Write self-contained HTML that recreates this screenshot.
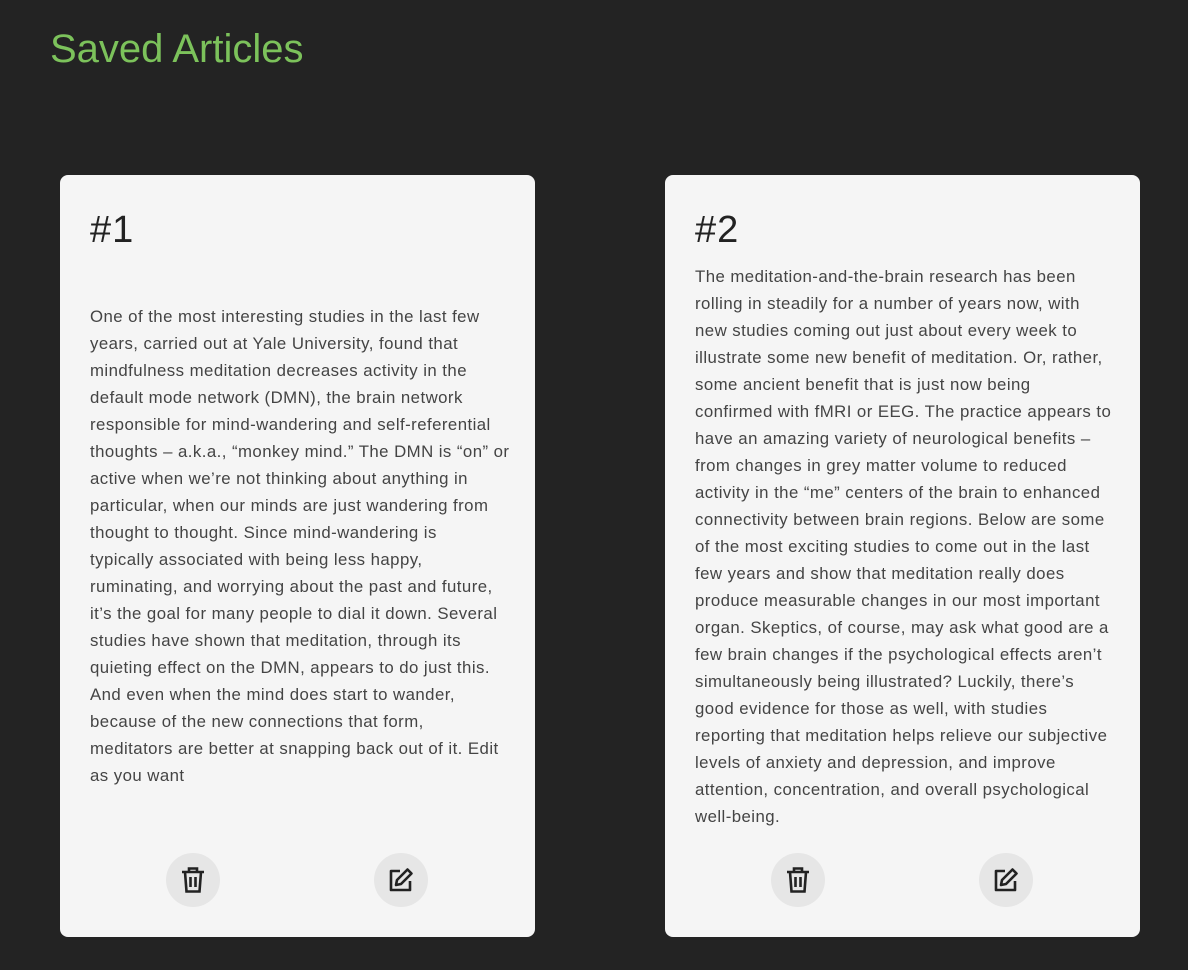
<!DOCTYPE html>
<html><head><meta charset="utf-8"><style>
body{margin:0;background:#232323;width:1188px;height:970px;position:relative;overflow:hidden;font-family:"Liberation Sans",sans-serif}
h1{position:absolute;left:50px;top:27px;margin:0;font-weight:normal;font-size:40px;color:#7cc25b;letter-spacing:0px}
.card{position:absolute;top:175px;width:475px;height:762px;background:#f5f5f5;border-radius:8px}
.num{position:absolute;left:30px;top:34px;font-size:38px;color:#222;letter-spacing:1px}
.txt{position:absolute;left:30px;font-size:16.8px;line-height:27px;color:#444;white-space:nowrap;letter-spacing:0.45px}
.btn{position:absolute;top:678px;width:54px;height:54px;border-radius:50%;background:#e6e6e6;display:flex;align-items:center;justify-content:center}
</style></head><body>
<h1>Saved Articles</h1>
<div class="card" style="left:60px">
<div class="num">#1</div>
<div class="txt" style="top:128px">One of the most interesting studies in the last few<br>years, carried out at Yale University, found that<br>mindfulness meditation decreases activity in the<br>default mode network (DMN), the brain network<br>responsible for mind-wandering and self-referential<br>thoughts – a.k.a., “monkey mind.” The DMN is “on” or<br>active when we’re not thinking about anything in<br>particular, when our minds are just wandering from<br>thought to thought. Since mind-wandering is<br>typically associated with being less happy,<br>ruminating, and worrying about the past and future,<br>it’s the goal for many people to dial it down. Several<br>studies have shown that meditation, through its<br>quieting effect on the DMN, appears to do just this.<br>And even when the mind does start to wander,<br>because of the new connections that form,<br>meditators are better at snapping back out of it. Edit<br>as you want</div>
<div class="btn" style="left:106px"><svg width="26" height="28" viewBox="0 0 26 28" fill="none" stroke="#222" stroke-width="2.6"><path d="M2 6h22M9 6V2.5h8V6M5 6l1.5 19.5h13L21 6M10.5 11v10M15.5 11v10"/></svg></div>
<div class="btn" style="left:314px"><svg width="28" height="28" viewBox="0 0 28 28" fill="none" stroke="#222" stroke-width="2.6" stroke-linejoin="round"><path d="M13 5H4v19h19v-9"/><path d="M20.5 3.5l4 4L14 18l-5 1 1-5z"/></svg></div>
</div>
<div class="card" style="left:665px">
<div class="num">#2</div>
<div class="txt" style="top:88px">The meditation-and-the-brain research has been<br>rolling in steadily for a number of years now, with<br>new studies coming out just about every week to<br>illustrate some new benefit of meditation. Or, rather,<br>some ancient benefit that is just now being<br>confirmed with fMRI or EEG. The practice appears to<br>have an amazing variety of neurological benefits –<br>from changes in grey matter volume to reduced<br>activity in the “me” centers of the brain to enhanced<br>connectivity between brain regions. Below are some<br>of the most exciting studies to come out in the last<br>few years and show that meditation really does<br>produce measurable changes in our most important<br>organ. Skeptics, of course, may ask what good are a<br>few brain changes if the psychological effects aren’t<br>simultaneously being illustrated? Luckily, there’s<br>good evidence for those as well, with studies<br>reporting that meditation helps relieve our subjective<br>levels of anxiety and depression, and improve<br>attention, concentration, and overall psychological<br>well-being.</div>
<div class="btn" style="left:106px"><svg width="26" height="28" viewBox="0 0 26 28" fill="none" stroke="#222" stroke-width="2.6"><path d="M2 6h22M9 6V2.5h8V6M5 6l1.5 19.5h13L21 6M10.5 11v10M15.5 11v10"/></svg></div>
<div class="btn" style="left:314px"><svg width="28" height="28" viewBox="0 0 28 28" fill="none" stroke="#222" stroke-width="2.6" stroke-linejoin="round"><path d="M13 5H4v19h19v-9"/><path d="M20.5 3.5l4 4L14 18l-5 1 1-5z"/></svg></div>
</div>
</body></html>
